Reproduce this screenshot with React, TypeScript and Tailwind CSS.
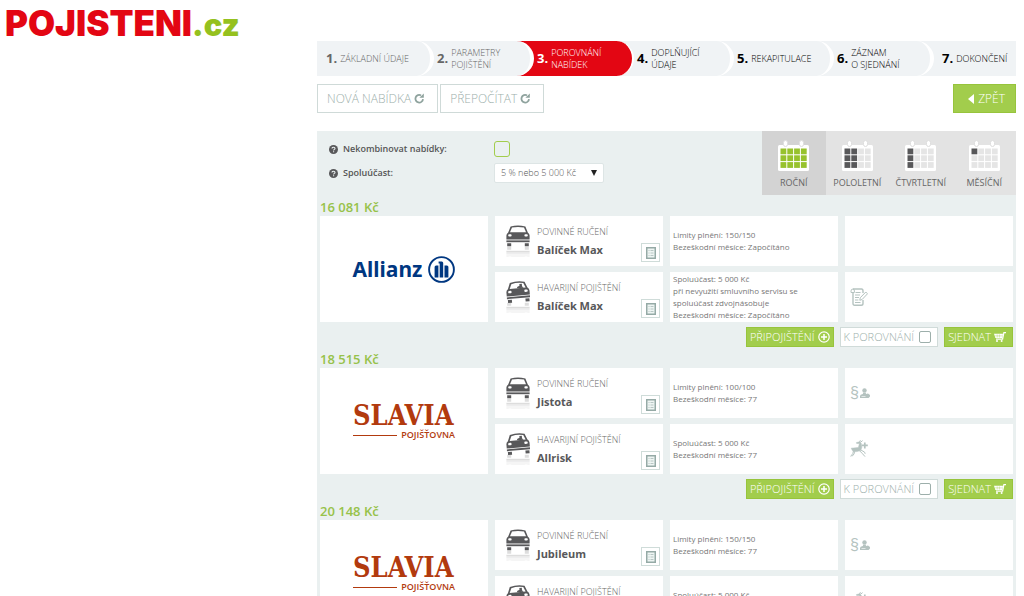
import { clsx } from "clsx"

type Vendor = "allianz" | "slavia"
type Extra = "contract" | "legal" | "animal"

interface Product {
  kind: "liability" | "collision"
  name: string
  details: string[]
  extra?: Extra
}

interface Offer {
  price: string
  vendor: Vendor
  products: Product[]
}

const steps = [
  { lines: ["ZÁKLADNÍ ÚDAJE"], state: "done" },
  { lines: ["PARAMETRY", "POJIŠTĚNÍ"], state: "done" },
  { lines: ["POROVNÁNÍ", "NABÍDEK"], state: "active" },
  { lines: ["DOPLŇUJÍCÍ", "ÚDAJE"], state: "next" },
  { lines: ["REKAPITULACE"], state: "next" },
  { lines: ["ZÁZNAM", "O SJEDNÁNÍ"], state: "next" },
  { lines: ["DOKONČENÍ"], state: "next" },
]

const periods = [
  { label: "ROČNÍ", cols: 4, rows: 3 },
  { label: "POLOLETNÍ", cols: 2, rows: 3 },
  { label: "ČTVRTLETNÍ", cols: 1, rows: 3 },
  { label: "MĚSÍČNÍ", cols: 1, rows: 1 },
]

const offers: Offer[] = [
  {
    price: "16 081 Kč",
    vendor: "allianz",
    products: [
      { kind: "liability", name: "Balíček Max", details: ["Limity plnění: 150/150", "Bezeškodní měsíce: Započítáno"] },
      {
        kind: "collision",
        name: "Balíček Max",
        details: ["Spoluúčast: 5 000 Kč", "při nevyužití smluvního servisu se", "spoluúčast zdvojnásobuje", "Bezeškodní měsíce: Započítáno"],
        extra: "contract",
      },
    ],
  },
  {
    price: "18 515 Kč",
    vendor: "slavia",
    products: [
      { kind: "liability", name: "Jistota", details: ["Limity plnění: 100/100", "Bezeškodní měsíce: 77"], extra: "legal" },
      { kind: "collision", name: "Allrisk", details: ["Spoluúčast: 5 000 Kč", "Bezeškodní měsíce: 77"], extra: "animal" },
    ],
  },
  {
    price: "20 148 Kč",
    vendor: "slavia",
    products: [
      { kind: "liability", name: "Jubileum", details: ["Limity plnění: 150/150", "Bezeškodní měsíce: 77"], extra: "legal" },
      { kind: "collision", name: "Allrisk", details: ["Spoluúčast: 5 000 Kč", "Bezeškodní měsíce: 77"], extra: "animal" },
    ],
  },
]

function ReloadIcon() {
  return (
    <svg width="11" height="11" viewBox="0 0 11 11" fill="none" aria-hidden="true">
      <path d="M7 2.4A3.8 3.8 0 1 0 9 6.2" stroke="#8fa39e" strokeWidth="1.8" />
      <path d="M9.8.6v4.2H5.4z" fill="#8fa39e" />
    </svg>
  )
}

function HelpIcon() {
  return (
    <svg width="9" height="9" viewBox="0 0 9 9" fill="none" aria-hidden="true">
      <circle cx="4.5" cy="4.5" r="4.5" fill="#58585a" />
      <path d="M3 3.5C3 1.7 6 1.8 6 3.4 6 4.4 4.6 4.3 4.6 5.4M4.6 6.2v1.1" stroke="#eaf0f0" strokeWidth="1.1" />
    </svg>
  )
}

function CalendarIcon({ cols, rows }: { cols: number; rows: number }) {
  const on = cols === 4 ? "#97c22d" : "#58585a"
  return (
    <svg width="31" height="31" viewBox="0 0 31 31" aria-hidden="true">
      <rect y="5" width="31" height="26" rx="1.5" fill="#fff" />
      <g fill="#fff" stroke="#dedede">
        <rect x="5.5" y=".5" width="4" height="6" rx="2" />
        <rect x="21.5" y=".5" width="4" height="6" rx="2" />
      </g>
      {[0, 1, 2].map((r) =>
        [0, 1, 2, 3].map((c) => (
          <rect key={`${r}-${c}`} x={2.5 + c * 6.8} y={8.5 + r * 6.8} width="5.8" height="5.8" fill={c < cols && r < rows ? on : "#e5e5e5"} />
        ))
      )}
    </svg>
  )
}

function CarBody({ tilted }: { tilted: boolean }) {
  return (
    <g transform={tilted ? "rotate(-5 12 11)" : undefined}>
      <path d="M4.6 1.4Q12-.6 19.4 1.4L21.8 7.4Q23.6 8.6 23.6 10.6V14.6H.4V10.6Q.4 8.6 2.2 7.4z" fill="#58585a" />
      <path d="M6 2.6Q12 1.2 18 2.6L20 7.2H4z" fill="#fff" />
      {tilted && <path d="M11.5 7.2V6L14 5V3.2h2.5V5.6L18 7.2z" fill="#58585a" />}
      <rect x="2.2" y="9.2" width="3.4" height="2.4" rx="1" fill="#fff" />
      <rect x="18.4" y="9.2" width="3.4" height="2.4" rx="1" fill="#fff" />
      <rect x=".4" y="15.4" width="23.2" height="1.8" fill="#58585a" />
      <path d="M1.2 18.2h4v3h-4zM18.8 18.2h4v3h-4z" fill="#58585a" />
    </g>
  )
}

function CarIcon({ tilted }: { tilted: boolean }) {
  return (
    <svg width="24" height="32" viewBox="0 0 24 32" className="shrink-0" aria-hidden="true">
      <CarBody tilted={tilted} />
      <g transform="matrix(1 0 0 -1 0 43)" opacity=".2">
        <CarBody tilted={false} />
      </g>
      <path d="M0 29h24v3H0z" fill="#fff" fillOpacity=".7" />
    </svg>
  )
}

function SheetIcon() {
  return (
    <svg width="10" height="12" viewBox="0 0 10 12" fill="none" aria-hidden="true">
      <rect x=".75" y=".75" width="8.5" height="10.5" fill="#eef5f3" stroke="#95aaa6" strokeWidth="1.5" />
      <path d="M2.5 3.5h1M4.5 3.5h3M2.5 6h1M4.5 6h3M2.5 8.5h1M4.5 8.5h3" stroke="#a9bab7" strokeWidth=".8" />
    </svg>
  )
}

function PlusIcon() {
  return (
    <svg width="12" height="12" viewBox="0 0 12 12" fill="none" stroke="#fff" aria-hidden="true">
      <circle cx="6" cy="6" r="5.2" strokeWidth="1.2" />
      <path d="M6 3v6M3 6h6" strokeWidth="1.5" />
    </svg>
  )
}

function CartIcon() {
  return (
    <svg width="12" height="10" viewBox="0 0 12 10" fill="none" aria-hidden="true">
      <path d="M0 1.8h9L8.3 6H1.4z" fill="#fff" />
      <path d="M3.2 2.4v3.2M5.4 2.4v3.2M1 3.9h7.4" stroke="#a2cd4c" strokeWidth=".4" />
      <path d="M12 .7H9.9L8.6 7.2H2" stroke="#fff" strokeWidth="1.2" />
      <circle cx="3" cy="9" r="1" fill="#fff" />
      <circle cx="7.6" cy="9" r="1" fill="#fff" />
    </svg>
  )
}

function ExtraIcon({ extra }: { extra: Extra }) {
  if (extra === "legal") {
    return (
      <div className="flex items-center gap-px text-[#b5c3c0]">
        <span className="font-['Liberation_Sans',sans-serif] text-[16px] leading-4">§</span>
        <svg width="10" height="10" viewBox="0 0 10 10" fill="currentColor" aria-hidden="true">
          <circle cx="4.5" cy="2.4" r="2.2" />
          <path d="M3.3 4.5h2.4L6 6l2-.6 2 1.5V8.6L8.6 10H0V8q0-1.6 2.8-2z" />
          <path d="M1.5 8.5h4" stroke="#fff" strokeWidth=".6" />
        </svg>
      </div>
    )
  }
  if (extra === "animal") {
    return (
      <svg width="18" height="18" viewBox="0 0 18 18" fill="none" stroke="#b5c3c0" aria-hidden="true">
        <path d="M1.2 8.2 3.4 8 8.4 7.6 9.4 3.6 6.6 3.4 6.4 2.6 9.6 1.8 11.2 3.2 11.8 7.6 10.6 10.6 6.8 11.6 4 11.8 2.4 10.6z" fill="#b5c3c0" strokeWidth=".5" />
        <path d="M3.6 10.5 2.8 13.6.6 16.4M4.6 11.4 4 14l-2 2.4M9.4 10.6l3 3 2.6 3M10.6 9.8l4 2.4.6 1.6M9.6 2.2 10.4.2M10.4 2.4 12.6.6" strokeWidth="1" />
        <path d="M14.8 2.4v6M11.8 5.4h6" strokeWidth="1.7" />
      </svg>
    )
  }
  return (
    <svg width="18" height="18" viewBox="0 0 18 18" fill="none" stroke="#b5c3c0" aria-hidden="true">
      <path d="M3 1H11.5Q13 1 13 3V5M13 12v3.4q0 1.8-1.8 1.8H4.6Q3 17.2 3 15.5V4.5" strokeWidth="1.4" />
      <path d="M3 1Q1 1 1 3v1.5h3.4V3Q4.4 1 3 1zM5.5 4.5h5M5 7h5M5 9.5h4M5 12h3.4M5 14.5h5.5" />
      <path d="m9.8 12.3.4-2.5L15.8 4l1.7 1.8-5.4 5.7z" fill="#fff" />
    </svg>
  )
}

function AllianzLogo() {
  return (
    <div className="flex items-center gap-1.5 text-[#003781]">
      <span className="font-['Noto_Sans','Open_Sans',sans-serif] text-[21px] leading-7 font-bold">Allianz</span>
      <svg width="27" height="27" viewBox="0 0 27 27" fill="none" aria-hidden="true">
        <circle cx="13.5" cy="13.5" r="12.4" stroke="currentColor" strokeWidth="1.9" />
        <path
          d="M10.6 5.5h3.2q1.4 0 1.4 1.5v14.5h-3.5V7.5h-1.1zM6.6 21.5V11q0-1.5 1.5-1.5h2.3v12zM16.5 9.5h2.4q1.5 0 1.5 1.5v10.5h-3.9z"
          fill="currentColor"
        />
      </svg>
    </div>
  )
}

function SlaviaLogo() {
  return (
    <div className="w-[102px] text-[#b23a0e]">
      <div className="font-['DejaVu_Serif_Condensed','DejaVu_Serif',serif] text-[27px] leading-7 font-bold">SLAVIA</div>
      <div className="flex items-center gap-1">
        <span className="h-px flex-1 bg-[#b23a0e]" />
        <span className="text-[9px] leading-[10px] font-semibold">POJIŠŤOVNA</span>
      </div>
    </div>
  )
}

function OfferCard({ offer }: { offer: Offer }) {
  return (
    <article className="px-[3px] pb-px">
      <h2 className="h-5 text-[13px] leading-[22px] font-semibold text-[#97c24a]">{offer.price}</h2>
      <div className="grid grid-cols-4 gap-x-[7px] gap-y-1.5">
        <div className="row-span-2 flex items-center justify-center bg-white">
          {offer.vendor === "allianz" ? <AllianzLogo /> : <SlaviaLogo />}
        </div>
        {offer.products.map((p) => (
          <ProductCells key={p.kind} product={p} />
        ))}
      </div>
      <div className="flex justify-end gap-1.5 pt-[5px] text-[11px] font-light">
        <button className="flex h-5 items-center gap-[3px] border border-[#97c43c] bg-[#a2cd4c] px-[3px] text-white">
          PŘIPOJIŠTĚNÍ <PlusIcon />
        </button>
        <label className="flex h-5 items-center gap-[5px] border border-[#d0dbd9] bg-white pr-1.5 pl-[3px] text-[#9dafab]">
          K POROVNÁNÍ
          <input type="checkbox" className="size-3 appearance-none rounded-xs border border-[#9dafab] bg-white" />
        </label>
        <button className="flex h-5 items-center gap-[3px] border border-[#97c43c] bg-[#a2cd4c] pr-1.5 pl-[3px] text-white">
          SJEDNAT <CartIcon />
        </button>
      </div>
    </article>
  )
}

function ProductCells({ product }: { product: Product }) {
  const collision = product.kind === "collision"
  return (
    <>
      <div className="flex h-[50px] items-end justify-between bg-white pr-[3px] pl-[11px]">
        <div className="flex items-center gap-[7px] self-center">
          <CarIcon tilted={collision} />
          <div>
            <p className="text-[9px] leading-[18px] font-light whitespace-nowrap text-[#666]">
              {collision ? "HAVARIJNÍ POJIŠTĚNÍ" : "POVINNÉ RUČENÍ"}
            </p>
            <h3 className="text-[11px] leading-[18px] font-bold text-[#58585a]">{product.name}</h3>
          </div>
        </div>
        <button aria-label="Detail" className="mb-1 flex size-[19px] items-center justify-center border border-[#cfdcd9]">
          <SheetIcon />
        </button>
      </div>
      <div className="flex h-[50px] flex-col justify-center bg-white pl-[3px] text-[8px] leading-3 whitespace-nowrap text-[#777]">
        {product.details.map((d) => (
          <p key={d}>{d}</p>
        ))}
      </div>
      <div className="flex h-[50px] items-center bg-white pl-[5px]">{product.extra && <ExtraIcon extra={product.extra} />}</div>
    </>
  )
}

function Steps() {
  return (
    <ol className="grid h-[35px] grid-cols-[117fr_100fr_100fr_100fr_100fr_100fr_82fr]">
      {steps.map((s, i) => (
        <li
          key={s.lines[0]}
          style={{ zIndex: steps.length - i }}
          className={clsx(
            "relative flex items-center gap-[3px]",
            i === 0 ? "pl-[9px]" : "-ml-[18px]",
            i > 0 && i < 6 && "pl-[21px]",
            i === 6 && "pl-[26px]",
            i < 6 && "rounded-r-full border-white",
            i < 6 && (s.state === "active" ? "border-r-2" : "border-r-4"),
            s.state === "active" ? "bg-[#e30613] text-white" : "bg-[#f0f3f5]",
            s.state === "done" && "text-[#666]",
            s.state === "next" && "text-black"
          )}
        >
          <span className="text-[13px] font-bold">{i + 1}.</span>
          <span className="text-[9px] leading-3 font-light whitespace-nowrap">
            {s.lines.map((l) => (
              <span key={l} className="block">{l}</span>
            ))}
          </span>
        </li>
      ))}
    </ol>
  )
}

export default function App() {
  return (
    <div className="h-screen overflow-hidden bg-white font-['Open_Sans',sans-serif]">
      <header className="h-[41px] pl-[5px]">
        <a href="#" className="flex items-baseline font-['Inter',sans-serif] text-[35px] leading-[46px] font-black text-[#e30613]">
          POJISTENI<span className="text-[31px] text-[#95c11f]">.cz</span>
        </a>
      </header>

      <main className="mr-2 ml-[317px]">
        <Steps />

        <div className="flex gap-0.5 pt-2 text-[12px] font-light">
          <button className="flex h-[29px] items-center gap-[3px] border border-[#cfdad8] pr-3 pl-[9px] text-[#9dafab]">
            NOVÁ NABÍDKA <ReloadIcon />
          </button>
          <button className="flex h-[29px] items-center gap-[3px] border border-[#cfdad8] pr-3 pl-[9px] text-[#9dafab]">
            PŘEPOČÍTAT <ReloadIcon />
          </button>
          <button className="ml-auto flex h-[29px] items-center gap-1 border border-[#97c43c] bg-[#a2cd4c] pr-2.5 pl-3.5 text-white">
            <svg width="6" height="10" viewBox="0 0 6 10" aria-hidden="true">
              <path d="M6 0v10L0 5z" fill="#fff" />
            </svg>
            ZPĚT
          </button>
        </div>

        <section className="mt-[18px] bg-[#eaf0f0]">
          <div className="flex h-[65px] items-start justify-between">
            <div className="grid grid-cols-[165px_110px] items-center gap-y-1.5 pt-2.5 pl-3 text-[9px] font-semibold text-[#555]">
              <label htmlFor="combine" className="flex items-center gap-[5px]"><HelpIcon /> Nekombinovat nabídky:</label>
              <input id="combine" type="checkbox" className="size-4 appearance-none rounded-[3px] border-[1px] border-[#a2cd4c]" />
              <label htmlFor="deductible" className="flex items-center gap-[5px]"><HelpIcon /> Spoluúčast:</label>
              <div className="relative">
                <select
                  id="deductible"
                  className="block h-5 w-full appearance-none rounded-xs border border-[#dde5e5] bg-white pl-1.5 text-[9px] font-light text-[#555]"
                >
                  <option>5 % nebo 5 000 Kč</option>
                </select>
                <svg width="6" height="6" viewBox="0 0 6 6" className="pointer-events-none absolute top-[7px] right-[7px]" aria-hidden="true">
                  <path d="M0 0h6L3 6z" fill="#222" />
                </svg>
              </div>
            </div>
            <div className="grid h-16 w-[254px] grid-cols-4">
              {periods.map((p, i) => (
                <button
                  key={p.label}
                  className={clsx("flex flex-col items-center gap-[3px] pt-[9px] text-[9px] leading-[18px] text-[#666]", i === 0 ? "bg-[#d3d3d3]" : "bg-[#e3e3e3]")}
                >
                  <CalendarIcon cols={p.cols} rows={p.rows} />
                  {p.label}
                </button>
              ))}
            </div>
          </div>
          {offers.map((o) => (
            <OfferCard key={o.price} offer={o} />
          ))}
        </section>
      </main>
    </div>
  )
}
